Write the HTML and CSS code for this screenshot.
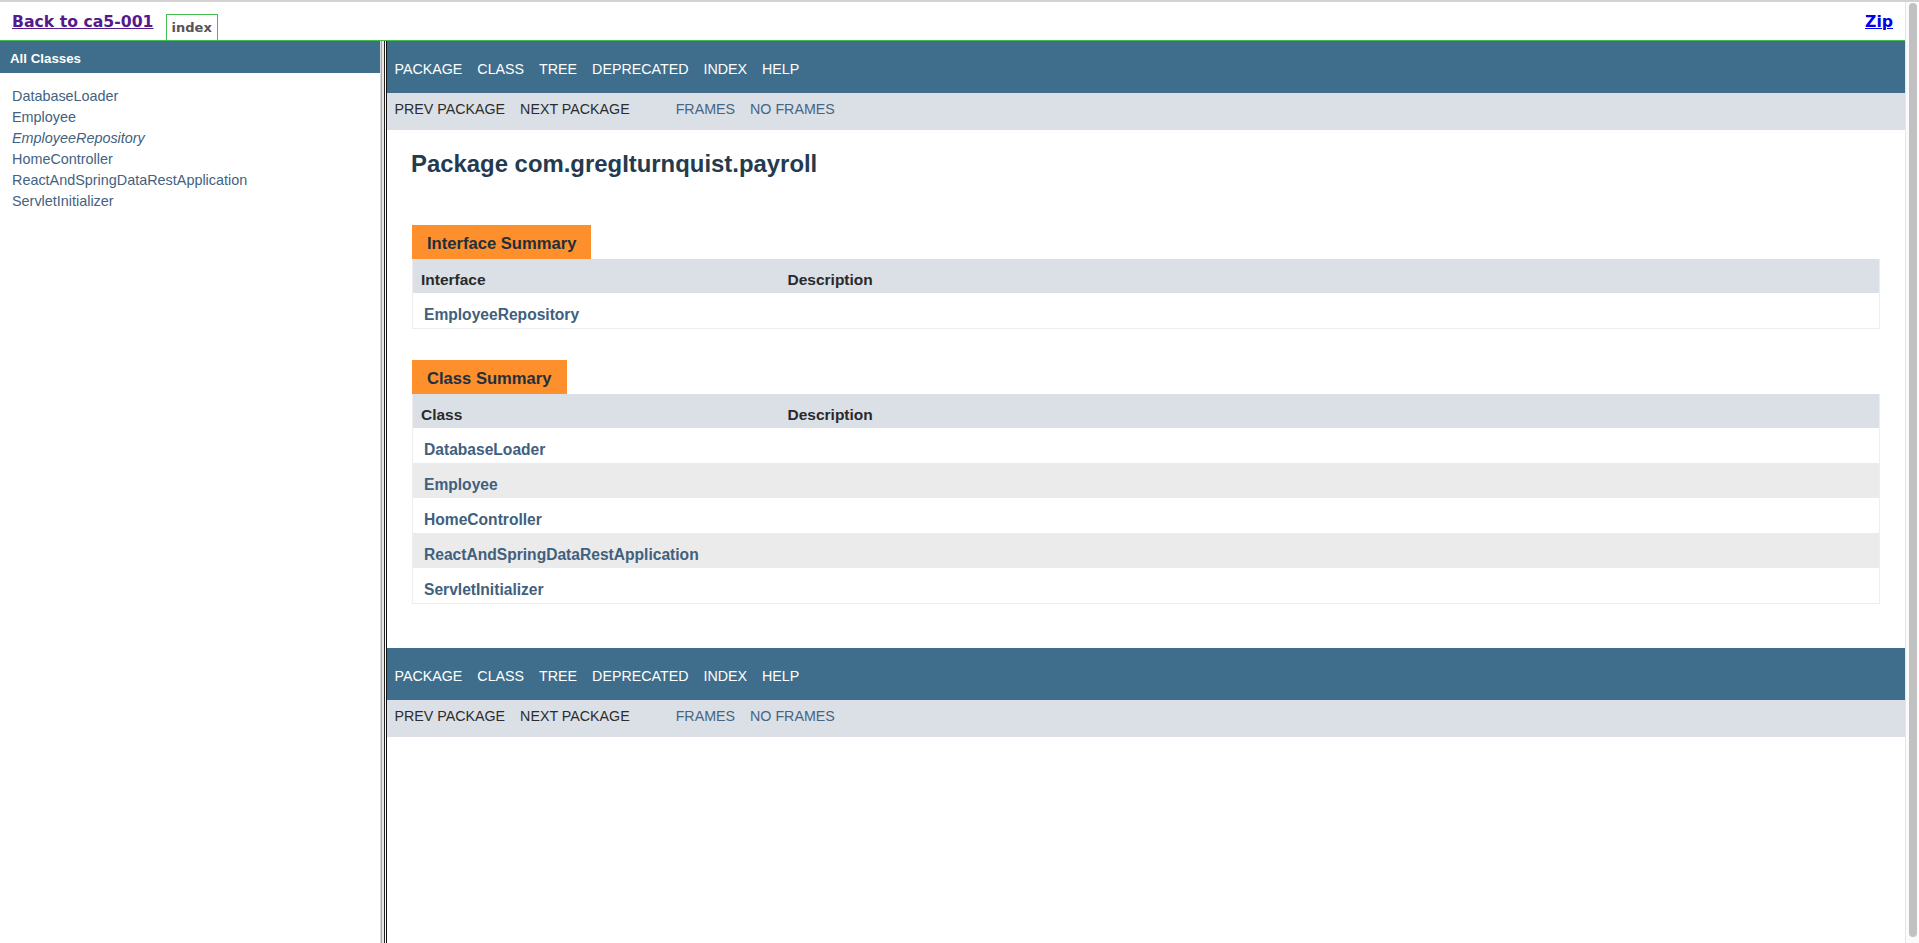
FILE: index.html
```html
<!DOCTYPE html>
<html lang="en">
<head>
<meta charset="utf-8">
<title>com.gregIturnquist.payroll</title>
<link rel="stylesheet" href="styles.css">
</head>
<body>
<div class="page">
  <div class="main">
    <header class="topbar">
      <a class="back" href="#">Back to ca5-001</a>
      <span class="tab">index</span>
      <a class="zip" href="#">Zip</a>
    </header>
    <div class="frames">
      <aside class="left">
        <div class="bar">All Classes</div>
        <ul class="classlist">
          <li><a href="#">DatabaseLoader</a></li>
          <li><a href="#">Employee</a></li>
          <li><a href="#" class="iface">EmployeeRepository</a></li>
          <li><a href="#">HomeController</a></li>
          <li><a href="#">ReactAndSpringDataRestApplication</a></li>
          <li><a href="#">ServletInitializer</a></li>
        </ul>
      </aside>
      <div class="divider"></div>
      <main class="right">
        <nav class="topnav">
          <ul class="navlist">
            <li>Package</li><li>Class</li><li>Tree</li><li>Deprecated</li><li>Index</li><li>Help</li>
          </ul>
        </nav>
        <nav class="subnav">
          <ul class="navlist">
            <li>Prev Package</li><li>Next Package</li>
          </ul>
          <ul class="navlist frames-list">
            <li><a href="#">Frames</a></li><li><a href="#">No Frames</a></li>
          </ul>
        </nav>
        <div class="content">
          <h1 class="title">Package com.gregIturnquist.payroll</h1>
          <section class="summary">
            <div class="caption">Interface Summary</div>
            <table class="sumtable">
              <thead>
                <tr><th class="col-first">Interface</th><th class="col-last">Description</th></tr>
              </thead>
              <tbody>
                <tr class="alt-a"><td class="col-first"><a href="#">EmployeeRepository</a></td><td class="col-last"></td></tr>
              </tbody>
            </table>
          </section>
          <section class="summary">
            <div class="caption">Class Summary</div>
            <table class="sumtable">
              <thead>
                <tr><th class="col-first">Class</th><th class="col-last">Description</th></tr>
              </thead>
              <tbody>
                <tr class="alt-a"><td class="col-first"><a href="#">DatabaseLoader</a></td><td class="col-last"></td></tr>
                <tr class="alt-b"><td class="col-first"><a href="#">Employee</a></td><td class="col-last"></td></tr>
                <tr class="alt-a"><td class="col-first"><a href="#">HomeController</a></td><td class="col-last"></td></tr>
                <tr class="alt-b"><td class="col-first"><a href="#">ReactAndSpringDataRestApplication</a></td><td class="col-last"></td></tr>
                <tr class="alt-a"><td class="col-first"><a href="#">ServletInitializer</a></td><td class="col-last"></td></tr>
              </tbody>
            </table>
          </section>
        </div>
        <nav class="topnav bottom">
          <ul class="navlist">
            <li>Package</li><li>Class</li><li>Tree</li><li>Deprecated</li><li>Index</li><li>Help</li>
          </ul>
        </nav>
        <nav class="subnav">
          <ul class="navlist">
            <li>Prev Package</li><li>Next Package</li>
          </ul>
          <ul class="navlist frames-list">
            <li><a href="#">Frames</a></li><li><a href="#">No Frames</a></li>
          </ul>
        </nav>
      </main>
    </div>
  </div>
  <div class="scrollbar"><div class="thumb"></div></div>
</div>
</body>
</html>
```
FILE: styles.css
```css
html, body {
  margin: 0;
  padding: 0;
  background: #ffffff;
}
body {
  font-family: "Liberation Sans", Arial, sans-serif;
  color: #353833;
}
.page {
  display: flex;
  height: 943px;
  box-sizing: border-box;
  border-top: 2px solid #d2d2d2;
  overflow: hidden;
}
.main {
  flex: 1;
  display: flex;
  flex-direction: column;
  min-width: 0;
}
.topbar {
  height: 38px;
  border-bottom: 1px solid #44bb4e;
  display: flex;
  align-items: flex-start;
  padding-left: 12px;
  font-family: "DejaVu Sans", Verdana, sans-serif;
  font-weight: bold;
}
.back, .zip {
  font-size: 15.7px;
  line-height: 19px;
  margin-top: 10px;
  text-decoration: underline;
}
.back { color: #551a8b; }
.zip {
  color: #0000ee;
  margin-left: auto;
  margin-right: 12px;
}
.tab {
  margin-top: 12px;
  margin-left: 12px;
  height: 26px;
  box-sizing: border-box;
  border: 1px solid #44bb4e;
  border-bottom: none;
  padding: 5px 5px 0;
  font-size: 13px;
  line-height: 16px;
  color: #555555;
}
.frames {
  flex: 1;
  display: flex;
  min-height: 0;
}
.left {
  width: 380px;
  flex: none;
  background: #ffffff;
}
.bar {
  height: 32px;
  box-sizing: border-box;
  background: #3e6e8b;
  color: #ffffff;
  font-weight: bold;
  font-size: 13.3px;
  line-height: 16px;
  padding: 10px 0 0 10px;
}
.classlist {
  list-style: none;
  margin: 13px 0 0;
  padding: 0 0 0 12px;
}
.classlist li {
  font-size: 14.4px;
  line-height: 21px;
}
.classlist a {
  color: #43627f;
  text-decoration: none;
}
.classlist .iface { font-style: italic; }
.divider {
  width: 7px;
  flex: none;
  background: linear-gradient(to right, #dadada 0 1px, #a5a5a5 1px 2px, #e8e8e8 2px 4px, #222 4px 5px, #fff 5px 6px, #111 6px 7px);
}
.right {
  flex: 1;
  min-width: 0;
  background: #ffffff;
}
.topnav {
  height: 52px;
  box-sizing: border-box;
  background: #3e6e8b;
  padding-top: 20px;
  color: #ffffff;
}
.topnav.bottom { padding-top: 20px; }
.navlist {
  list-style: none;
  margin: 0;
  padding: 0;
  display: flex;
}
.navlist li {
  padding: 0 7.5px;
  font-size: 14.25px;
  line-height: 16px;
  text-transform: uppercase;
}
.subnav {
  height: 37px;
  box-sizing: border-box;
  background: #dbe0e7;
  padding-top: 8px;
  display: flex;
  color: #2c2c2c;
}
.frames-list { margin-left: 31px; }
.subnav a {
  color: #456584;
  text-decoration: none;
}
.content {
  padding: 0 25px 44px;
}
.title {
  margin: 20px 0 47px -1px;
  font-size: 23.9px;
  line-height: 28px;
  font-weight: bold;
  color: #243a4e;
}
.summary { margin-bottom: 31px; }
.summary:last-child { margin-bottom: 0; }
.caption {
  display: inline-block;
  vertical-align: top;
  background: #fd8f2d;
  color: #1f2f3d;
  font-weight: bold;
  font-size: 16.6px;
  line-height: 19px;
  padding: 9px 15px 6px;
}
.sumtable {
  width: 100%;
  border-collapse: separate;
  border-spacing: 0;
  border: 1px solid #eeeeee;
  border-top: none;
  table-layout: fixed;
}
.sumtable th {
  background: #dbe0e7;
  text-align: left;
  font-weight: bold;
  font-size: 15.5px;
  line-height: 18px;
  color: #2a2a2a;
  padding: 12px 3px 4px 8px;
}
.sumtable th.col-first {
  width: 25%;
  box-sizing: border-box;
}
.sumtable td {
  font-size: 15.6px;
  line-height: 18px;
  padding: 13px 3px 4px 11px;
  font-weight: bold;
}
.sumtable td a {
  color: #41607d;
  text-decoration: none;
}
.alt-a { background: #ffffff; }
.alt-b { background: #ebebec; }
.scrollbar {
  width: 14px;
  flex: none;
  box-sizing: border-box;
  border-left: 1px solid #e6e6e6;
  background: #fbfbfb;
  padding: 1px 2px 6px 3px;
  display: flex;
}
.thumb {
  flex: 1;
  background: #c1c1c1;
  border-radius: 4px;
}
```
